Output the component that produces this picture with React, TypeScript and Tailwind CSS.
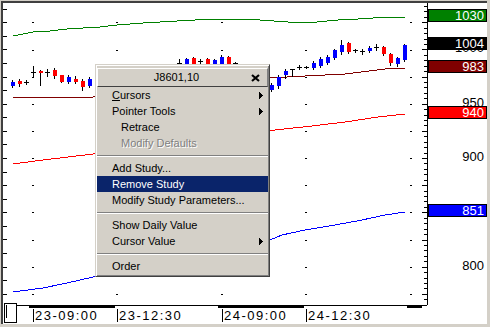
import React from "react";

type Candle = [number, "b" | "r" | "d", number, number, number, number];

// x, kind, body top, body bottom, high, low
const candles: Candle[] = [
  [12, "b", 82, 86, 80, 87],
  [19, "r", 81, 84, 79, 86],
  [26, "d", 82, 82, 80, 84],
  [33, "d", 72, 72, 66, 77],
  [40, "r", 71, 73, 70, 85],
  [47, "d", 72, 72, 69, 76],
  [54, "r", 70, 76, 68, 78],
  [61, "r", 75, 82, 75, 82],
  [68, "b", 77, 82, 75, 83],
  [75, "r", 79, 82, 76, 83],
  [82, "r", 81, 87, 79, 90],
  [89, "b", 79, 86, 77, 87],
  [179, "d", 63, 63, 59, 63],
  [186, "b", 59, 66, 58, 68],
  [193, "r", 58, 66, 57, 68],
  [200, "d", 61, 61, 59, 64],
  [207, "r", 59, 66, 58, 68],
  [214, "b", 60, 66, 59, 68],
  [221, "b", 57, 66, 55, 68],
  [228, "r", 57, 66, 56, 68],
  [235, "d", 63, 63, 62, 65],
  [271, "b", 85, 90, 83, 91],
  [278, "b", 77, 86, 75, 88],
  [285, "b", 71, 75, 69, 78],
  [292, "d", 69, 69, 69, 76],
  [299, "d", 67, 67, 65, 69],
  [306, "d", 67, 67, 66, 68],
  [313, "b", 63, 68, 61, 69],
  [320, "b", 59, 66, 57, 67],
  [327, "b", 57, 63, 55, 64],
  [334, "b", 50, 58, 49, 59],
  [341, "b", 45, 52, 40, 54],
  [348, "r", 43, 52, 42, 53],
  [355, "d", 50, 50, 49, 52],
  [362, "d", 51, 51, 49, 54],
  [369, "b", 48, 51, 46, 52],
  [376, "d", 47, 47, 44, 50],
  [383, "r", 47, 54, 46, 55],
  [390, "r", 54, 63, 53, 65],
  [397, "b", 58, 64, 57, 66],
  [404, "b", 45, 60, 44, 61],
];

const gridX = [33, 117, 222, 306, 411];
const gridY = [22, 50, 77, 104, 131, 158, 185, 212, 240, 267, 294];

const lines: { color: string; pts: [number, number][] }[] = [
  {
    color: "#008000",
    pts: [[13, 36], [33, 32], [50, 31], [67, 29], [100, 27], [117, 25], [143, 23], [177, 21], [213, 19], [245, 19], [260, 20], [288, 22], [317, 22], [338, 20], [358, 19], [388, 17], [405, 17]],
  },
  {
    color: "#800000",
    pts: [[13, 97], [93, 97], [180, 88], [270, 78], [305, 76], [345, 74], [385, 69], [405, 68]],
  },
  {
    color: "#ff0000",
    pts: [[13, 164], [43, 160], [93, 154], [180, 142], [275, 130], [312, 126], [345, 122], [378, 117], [405, 114]],
  },
  {
    color: "#0000ff",
    pts: [[13, 292], [43, 288], [67, 283], [93, 277], [180, 258], [270, 240], [282, 235], [305, 230], [335, 225], [362, 220], [385, 215], [405, 212]],
  },
];

const rightTicks = Array.from({ length: 58 }, (_, i) => i - 4)
  .map((k) => ({ y: Math.round(22.3 + k * 5.43), major: k % 5 === 0 }))
  .filter((t) => t.y > 3 && t.y < 305);

const leftTicks = Array.from({ length: 24 }, (_, i) => Math.round(8.7 + i * 13.57)).filter((y) => y < 305);

function Chart() {
  return (
    <svg width={424} height={302} viewBox="3 3 424 302" shapeRendering="crispEdges" className="block">
      {leftTicks.map((y) => (
        <rect key={"l" + y} x={3} y={y} width={4} height={1} fill="#000" />
      ))}
      {rightTicks.map((t) => (
        <rect key={"r" + t.y} x={t.major ? 422 : 424} y={t.y} width={t.major ? 5 : 3} height={1} fill="#000" />
      ))}
      {gridX.map((x) =>
        gridY.map((y) => <rect key={x + "-" + y} x={x - 1} y={y} width={2} height={1} fill="#000" />)
      )}
      {lines.map((l) => (
        <polyline key={l.color} points={l.pts.map((p) => p.join(",")).join(" ")} fill="none" stroke={l.color} strokeWidth={1} />
      ))}
      {candles.map(([x, k, top, bot, hi, lo]) => (
        <g key={x}>
          <rect x={x} y={hi} width={1} height={lo - hi + 1} fill="#000" />
          {k === "d" ? (
            <rect x={x - 2} y={top} width={5} height={1} fill="#000" />
          ) : (
            <rect x={x - 1} y={top} width={4} height={bot - top} fill={k === "b" ? "#0000ff" : "#ff0000"} />
          )}
        </g>
      ))}
    </svg>
  );
}

const priceBoxes = [
  { v: "1030", top: "top-[6px]", bg: "bg-[#008000]" },
  { v: "1004", top: "top-[34px]", bg: "bg-black" },
  { v: "983", top: "top-[57px]", bg: "bg-[#800000]" },
  { v: "940", top: "top-[103px]", bg: "bg-[#ff0000]" },
  { v: "851", top: "top-[201px]", bg: "bg-[#0000ff]" },
];

const priceText = [
  { v: "1000", top: "top-[38px]" },
  { v: "950", top: "top-[93px]" },
  { v: "900", top: "top-[147px]" },
  { v: "800", top: "top-[256px]" },
];

function PriceAxis() {
  return (
    <div className="relative w-[60px] border-l border-black text-[13px]">
      {priceText.map((p) => (
        <div key={p.v} className={`absolute right-[3px] ${p.top} leading-[13px] text-black`}>
          {p.v}
        </div>
      ))}
      {priceBoxes.map((p) => (
        <div
          key={p.v}
          className={`absolute left-0 right-0 ${p.top} h-[13px] border border-black ${p.bg} pr-[2px] text-right leading-[11px] text-white`}
        >
          {p.v}
        </div>
      ))}
    </div>
  );
}

const timeLabels = [
  { t: "23-09:00", left: "left-[30px]" },
  { t: "23-12:30", left: "left-[114px]" },
  { t: "24-09:00", left: "left-[219px]" },
  { t: "24-12:30", left: "left-[303px]" },
];

function TimeAxis() {
  return (
    <div className="relative h-[19px]">
      <svg width={424} height={3} viewBox="3 305 424 3" shapeRendering="crispEdges" className="absolute left-0 top-0">
        <rect x={17} y={305} width={410} height={1} fill="#000" />
        <rect x={29} y={305} width={86} height={3} fill="#000" />
        <rect x={218} y={305} width={86} height={3} fill="#000" />
        <rect x={407} y={305} width={15} height={3} fill="#000" />
      </svg>
      <div className="absolute left-px top-[-2px] h-[20px] w-[13px] border border-black bg-white pl-px pt-px">
        <div className="h-[13px] w-px bg-black" />
      </div>
      {timeLabels.map((l) => (
        <div
          key={l.t}
          className={`absolute ${l.left} top-[4px] h-[13px] border-l border-black pl-px text-[13px] leading-[13px] tracking-[1.5px] text-black`}
        >
          {l.t}
        </div>
      ))}
    </div>
  );
}

function Arrow() {
  return (
    <svg width={4} height={7} viewBox="0 0 4 7" shapeRendering="crispEdges">
      <polygon points="0,0 4,3.5 0,7" fill="#000" />
    </svg>
  );
}

function Sep() {
  return (
    <div className="flex h-[9px] items-center">
      <div className="h-[2px] w-full border-t border-b border-t-[#808080] border-b-white" />
    </div>
  );
}

function Item({ children, arrow, active, indent, disabled }: { children: React.ReactNode; arrow?: boolean; active?: boolean; indent?: boolean; disabled?: boolean }) {
  return (
    <div
      className={`flex h-[16px] items-center justify-between pr-[5px] ${indent ? "pl-[24px]" : "pl-[15px]"} ${
        active ? "bg-[#0a246a] text-white" : disabled ? "text-[#808080] [text-shadow:1px_1px_0_#fff]" : "text-black"
      }`}
    >
      <span>{children}</span>
      {arrow && <Arrow />}
    </div>
  );
}

function ContextMenu() {
  return (
    <div className="absolute left-[95px] top-[64px] w-[175px] border border-b-[#404040] border-l-[#d4d0c8] border-r-[#404040] border-t-[#d4d0c8] bg-[#d4d0c8] p-px pb-[2px] text-[11px] shadow-[inset_1px_1px_#fff,inset_-1px_-1px_#808080]">
      <div className="mt-[2px] flex h-[19px] items-center justify-center border border-b-[#404040] border-l-white border-r-[#808080] border-t-white pr-[6px] text-black">
        <span className="ml-[-6px]">J8601,10</span>
        <svg width={9} height={8} viewBox="0 0 9 8" className="absolute right-[9px]">
          <path d="M1 1 L8 7 M8 1 L1 7" stroke="#000" strokeWidth={2.2} />
        </svg>
      </div>
      <Item arrow>
        <span className="underline underline-offset-1">C</span>ursors
      </Item>
      <Item arrow>Pointer Tools</Item>
      <Item indent>Retrace</Item>
      <Item indent disabled>
        Modify Defaults
      </Item>
      <Sep />
      <Item>Add Study...</Item>
      <Item active>Remove Study</Item>
      <Item>Modify Study Parameters...</Item>
      <Sep />
      <Item>Show Daily Value</Item>
      <Item arrow>Cursor Value</Item>
      <Sep />
      <Item>Order</Item>
    </div>
  );
}

export default function App() {
  return (
    <div className="relative h-[327px] w-[490px] bg-[#d4d0c8] pl-px pt-px font-['Liberation_Sans',Arial,sans-serif]">
      <div className="flex h-[323px] w-[486px] flex-col border-l-2 border-t-2 border-[#404040] bg-white">
        <div className="flex h-[302px]">
          <Chart />
          <PriceAxis />
        </div>
        <TimeAxis />
      </div>
      <ContextMenu />
    </div>
  );
}
